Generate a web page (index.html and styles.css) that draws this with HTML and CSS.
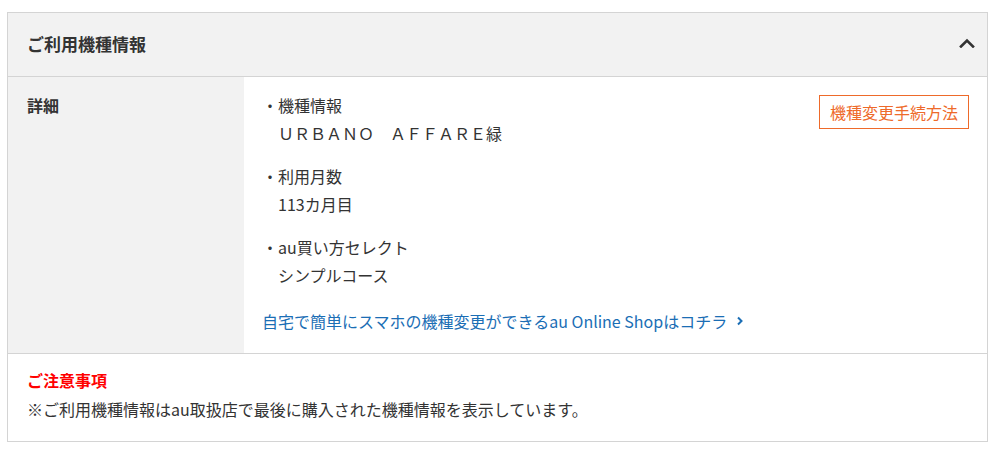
FILE: index.html
```html
<!DOCTYPE html>
<html lang="ja">
<head>
<meta charset="utf-8">
<title>ご利用機種情報</title>
<link rel="stylesheet" href="styles.css">
</head>
<body>
<section class="panel">
  <header class="panel-head">
    <h2 class="panel-title">ご利用機種情報</h2>
    <svg class="chevron-up" width="16" height="10" viewBox="0 0 16 10" aria-hidden="true">
      <path d="M2 8.5 L8 2.5 L14 8.5" fill="none" stroke="#333" stroke-width="2.6" stroke-linecap="square"/>
    </svg>
  </header>
  <div class="detail-row">
    <div class="detail-label">詳細</div>
    <div class="detail-body">
      <div class="detail-list">
        <dl class="item">
          <dt>・機種情報</dt>
          <dd class="model">ＵＲＢＡＮＯ　ＡＦＦＡＲＥ緑</dd>
        </dl>
        <dl class="item">
          <dt>・利用月数</dt>
          <dd>113カ月目</dd>
        </dl>
        <dl class="item">
          <dt>・au買い方セレクト</dt>
          <dd>シンプルコース</dd>
        </dl>
        <a class="shop-link" href="#">自宅で簡単にスマホの機種変更ができるau Online Shopはコチラ<svg class="chevron-right" width="8" height="10" viewBox="0 0 8 10" aria-hidden="true"><path d="M2 1.5 L5.5 5 L2 8.5" fill="none" stroke="#1b6eb5" stroke-width="2"/></svg></a>
      </div>
      <a class="change-btn" href="#">機種変更手続方法</a>
    </div>
  </div>
  <div class="notes">
    <p class="notes-title">ご注意事項</p>
    <p class="notes-text">※ご利用機種情報はau取扱店で最後に購入された機種情報を表示しています。</p>
  </div>
</section>
</body>
</html>
```

FILE: styles.css
```css
* { box-sizing: border-box; }

html, body {
  margin: 0;
  padding: 0;
  background: #fff;
}

body {
  font-family: "Noto Sans CJK JP", "Noto Sans", sans-serif;
  color: #333;
  font-size: 16px;
}

.panel {
  width: 981px;
  margin: 12px 0 0 7px;
  border: 1px solid #d4d4d4;
  background: #fff;
}

.panel-head {
  height: 64px;
  display: flex;
  align-items: center;
  justify-content: space-between;
  padding: 0 12px 0 19px;
  background: #f2f2f2;
  border-bottom: 1px solid #d4d4d4;
}

.panel-title {
  margin: -2px 0 0;
  font-size: 17px;
  font-weight: bold;
  color: #333;
  line-height: 28px;
}

.chevron-up {
  display: block;
  margin-top: -4px;
}

.detail-row {
  display: flex;
  border-bottom: 1px solid #d4d4d4;
}

.detail-label {
  width: 236px;
  flex: none;
  background: #f2f2f2;
  padding: 14px 19px 18px;
  font-weight: bold;
  line-height: 28px;
}

.detail-body {
  flex: 1;
  display: flex;
  justify-content: space-between;
  align-items: flex-start;
  padding: 14px 18px 18px 18px;
}

.detail-list {
  display: flex;
  flex-direction: column;
  line-height: 28px;
}

.item {
  margin: 0 0 15px;
}

.item dt, .item dd {
  margin: 0;
}

.item dd {
  padding-left: 16px;
}

.item:nth-of-type(3) {
  margin-bottom: 18px;
}

.shop-link {
  color: #1b6eb5;
  text-decoration: none;
  display: flex;
  align-items: center;
}

.chevron-right {
  margin-left: 9px;
}

.change-btn {
  display: block;
  margin-top: 4px;
  border: 1px solid #ee6a2a;
  color: #ee6a2a;
  text-decoration: none;
  line-height: 32px;
  padding: 0 10px;
  font-size: 16px;
}

.notes {
  padding: 12px 19px 18px;
}

.notes p {
  margin: 0;
  line-height: 28px;
}

.notes-title {
  color: #f00;
  font-weight: bold;
}

.notes-text {
  margin-top: 1px !important;
}
```
